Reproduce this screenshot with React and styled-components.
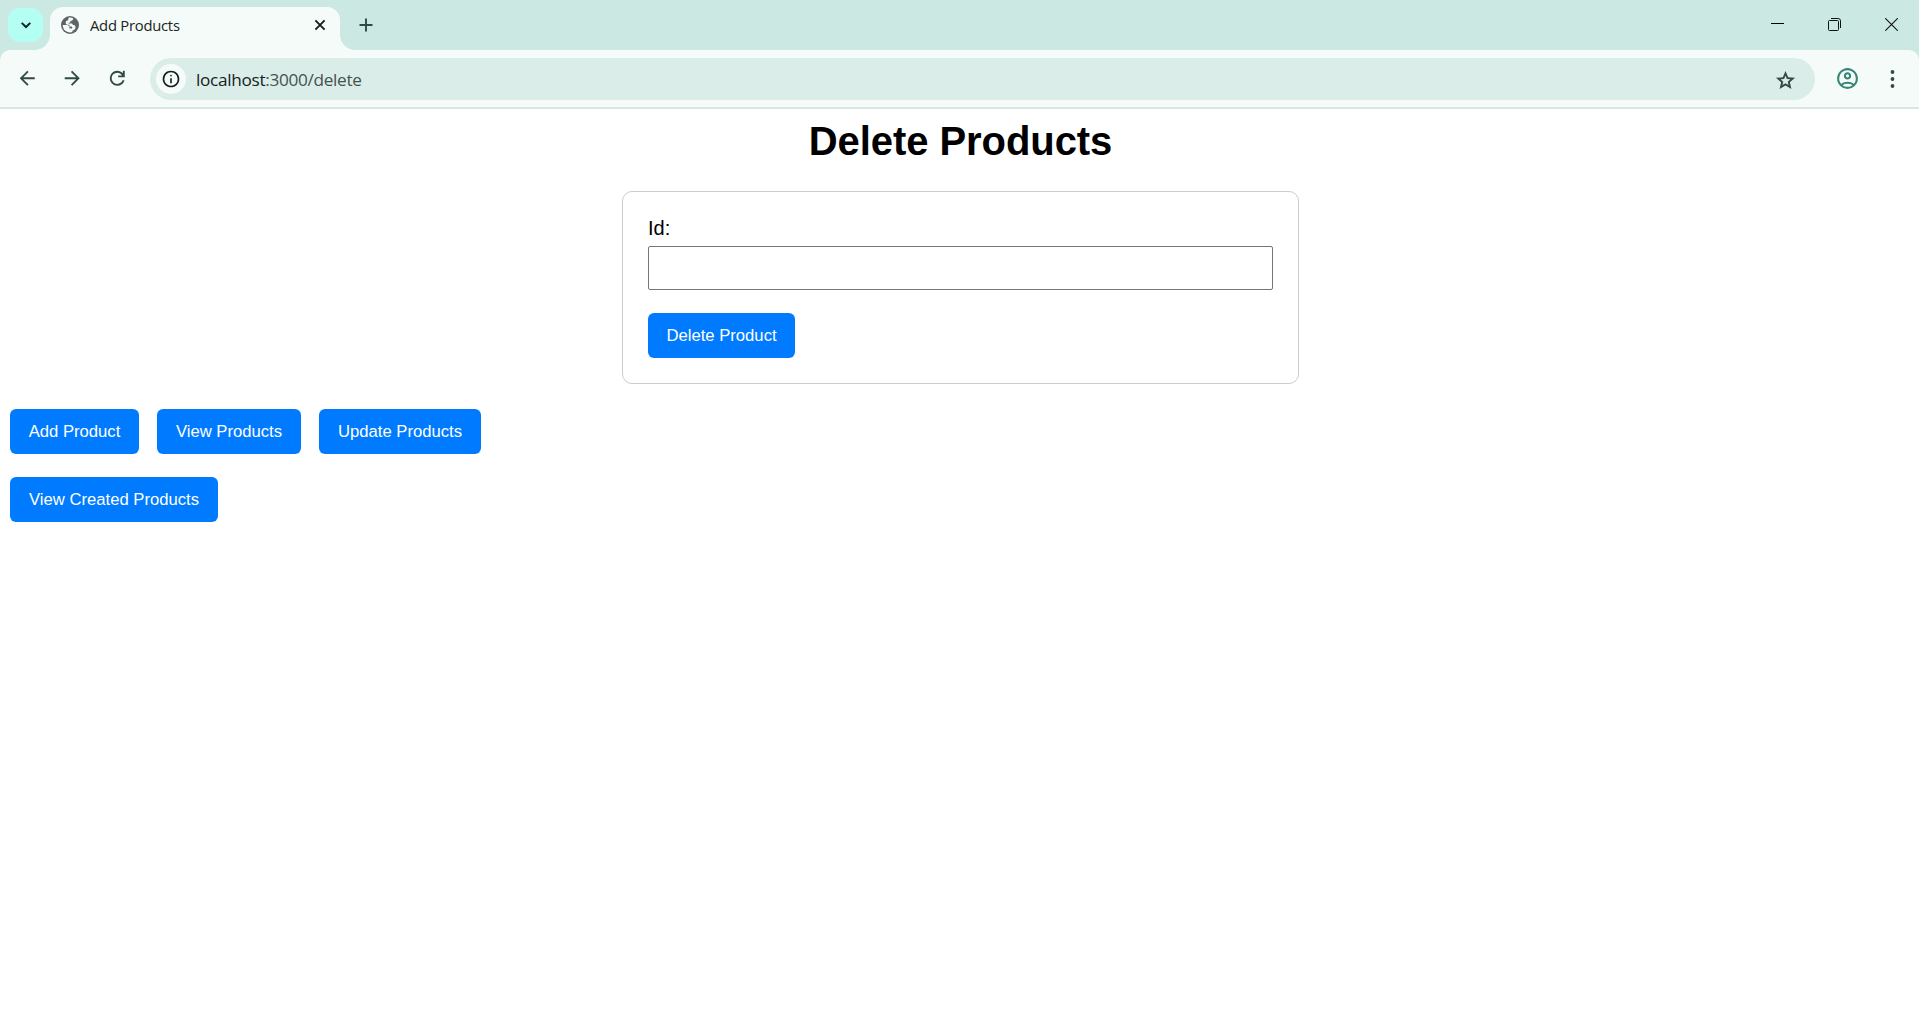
import React from "react";
import styled, { createGlobalStyle } from "styled-components";

const GlobalStyle = createGlobalStyle`
  * { box-sizing: border-box; }
  html, body { margin: 0; background: #fff; overflow: hidden; }
`;

const Window = styled.div`
  display: flex;
  flex-direction: column;
  height: 1017px;
  font-family: "Liberation Sans", Arial, sans-serif;
`;

const TabStrip = styled.header`
  display: flex;
  height: 50px;
  background: #cce8e2;
`;

const TabSearch = styled.button`
  display: grid;
  place-items: center;
  width: 35px;
  height: 34px;
  margin: 8px 7px 0 8px;
  padding: 0;
  border: 0;
  border-radius: 12px;
  background: #b4fff4;
`;

const Tab = styled.div`
  position: relative;
  display: flex;
  align-items: center;
  width: 290px;
  height: 43px;
  margin-top: 7px;
  padding: 0 14px 7px 11px;
  border-radius: 13px 13px 0 0;
  background: #f5fbf9;

  &::before,
  &::after {
    content: "";
    position: absolute;
    bottom: 0;
    width: 15px;
    height: 15px;
  }
  &::before {
    left: -15px;
    background: radial-gradient(circle at 0 0, transparent 14.5px, #f5fbf9 15.2px);
  }
  &::after {
    right: -15px;
    background: radial-gradient(circle at 100% 0, transparent 14.5px, #f5fbf9 15.2px);
  }
`;

const TabTitle = styled.span`
  flex: 1;
  margin-left: 11px;
  color: #1a2422;
  font: 14.8px/20px "Open Sans", "Noto Sans", sans-serif;
  letter-spacing: -0.25px;
`;

const NewTab = styled.div`
  display: grid;
  place-items: center;
  width: 24px;
  height: 24px;
  margin: 13px 0 0 14px;
`;

const WindowControls = styled.div`
  display: flex;
  margin-left: auto;
`;

const WindowControl = styled.div`
  display: grid;
  place-items: center;
  width: ${({ $width }) => $width || 57}px;
  height: 49px;
`;

const ToolbarBack = styled.div`
  background: #cce8e2;
`;

const Toolbar = styled.nav`
  display: flex;
  align-items: center;
  height: 59px;
  padding: 1px 16px 0;
  border-bottom: 2px solid #d9e6e2;
  border-radius: 10px 10px 0 0;
  background: #f5fbf9;
`;

const NavIcons = styled.div`
  display: flex;
  gap: 22.5px;
  width: 134px;
  padding-bottom: 1px;
`;

const AddressBar = styled.div`
  display: flex;
  align-items: center;
  flex: 1;
  height: 42px;
  padding: 0 18px 0 6px;
  border-radius: 21px;
  background: #dbede8;
`;

const SiteInfo = styled.div`
  display: grid;
  place-items: center;
  width: 30px;
  height: 30px;
  border-radius: 50%;
  background: #f5fbf9;
`;

const Url = styled.span`
  flex: 1;
  margin-left: 10px;
  padding-top: 1px;
  color: #46524f;
  font: 17.2px/24px "Open Sans", "Noto Sans", sans-serif;
  letter-spacing: -0.31px;
`;

const Host = styled.span`
  color: #16201e;
`;

const ToolbarActions = styled.div`
  display: flex;
  align-items: center;
  gap: 21px;
  width: 88px;
  padding: 0 0 1px 20px;
`;

const Glyph = styled.svg`
  display: block;
  flex: none;
  width: ${({ $size }) => $size}px;
  height: ${({ $size }) => $size}px;
  color: ${({ $color }) => $color || "#304a45"};
`;

const Page = styled.main`
  flex: 1;
  padding: 9px 8px 10px 10px;
  font-size: 20px;
`;

const Title = styled.h1`
  margin: 0 0 27px;
  font-size: 40px;
  line-height: 46px;
  letter-spacing: -0.06px;
  text-align: center;
`;

const Form = styled.form`
  width: 677px;
  height: 193px;
  margin: 0 auto 25px;
  padding: 25px;
  border: 1px solid #ccc;
  border-radius: 10px;
`;

const Label = styled.label`
  display: block;
  margin-bottom: 6px;
  line-height: 23px;
`;

const TextInput = styled.input`
  display: block;
  width: 100%;
  height: 44px;
  margin: 0 0 23px;
  padding: 10px;
  border: 1px solid #767676;
  border-radius: 2px;
  background: #fff;
  font-size: 16.67px;
`;

const Button = styled.button`
  height: 45px;
  width: ${({ $width }) => $width}px;
  padding: 0;
  border: 0;
  border-radius: 6px;
  background: #007bff;
  color: #fff;
  font: 16.67px/19px "Liberation Sans", Arial, sans-serif;
  white-space: nowrap;
`;

const ButtonRows = styled.div`
  display: flex;
  flex-direction: column;
  gap: 23px;
`;

const ButtonRow = styled.div`
  display: flex;
  gap: 18px;
`;

function MaterialIcon({ path, size, color }) {
  return (
    <Glyph viewBox="0 -960 960 960" $size={size} $color={color}>
      <path fill="currentColor" d={path} />
    </Glyph>
  );
}

const icons = {
  back: "M313-440l224 224-57 56-320-320 320-320 57 56-224 224h487v80H313Z",
  forward: "M647-440H160v-80h487L423-744l57-56 320 320-320 320-57-56 224-224Z",
  reload:
    "M480-160q-134 0-227-93t-93-227q0-134 93-227t227-93q69 0 132 28.5T720-690v-110h80v280H520v-80h168q-32-56-87.5-88T480-720q-100 0-170 70t-70 170q0 100 70 170t170 70q77 0 139-44t87-116h84q-28 106-114 173t-196 67Z",
  info: "M440-280h80v-240h-80v240Zm40-320q17 0 28.5-11.500T520-640q0-17-11.500-28.500T480-680q-17 0-28.500 11.500T440-640q0 17 11.500 28.500T480-600Zm0 520q-83 0-156-31.500T197-197q-54-54-85.500-127T80-480q0-83 31.500-156T197-763q54-54 127-85.500T480-880q83 0 156 31.500T763-763q54 54 85.500 127T880-480q0 83-31.500 156T763-197q-54 54-127 85.500T480-80Zm0-80q134 0 227-93t93-227q0-134-93-227t-227-93q-134 0-227 93t-93 227q0 134 93 227t227 93Z",
  star: "M354-247l126-76 126 77-33-144 111-96-146-13-58-136-58 135-146 13 111 97-33 143ZM233-80l65-281L80-550l288-25 112-265 112 265 288 25-218 189 65 281-247-149L233-80Z",
  profile:
    "M234-276q51-39 114-61.500T480-360q69 0 132 22.500T726-276q35-41 54.500-93T800-480q0-133-93.500-226.500T480-800q-133 0-226.500 93.500T160-480q0 59 19.500 111t54.500 93Zm246-164q-59 0-99.500-40.500T340-580q0-59 40.500-99.500T480-720q59 0 99.500 40.500T620-580q0 59-40.500 99.500T480-440Zm0 360q-83 0-156-31.500T197-197q-54-54-85.500-127T80-480q0-83 31.500-156T197-763q54-54 127-85.500T480-880q83 0 156 31.500T763-763q54 54 85.500 127T880-480q0 83-31.500 156T763-197q-54 54-127 85.500T480-80Zm0-80q53 0 100-15.500t86-44.500q-39-29-86-44.500T480-280q-53 0-100 15.500T294-220q39 29 86 44.500T480-160Zm0-360q26 0 43-17t17-43q0-26-17-43t-43-17q-26 0-43 17t-17 43q0 26 17 43t43 17Z",
};

function GlobeIcon() {
  return (
    <Glyph viewBox="0 0 18 18" $size={18} $color="#5f6368">
      <circle cx="9" cy="9" r="9" fill="currentColor" />
      <path
        fill="#f5fbf9"
        d="M1.700 9h3.900c1.900 0 2.800.9 2.800 2.500v.9h2.300c.4 0 .6-.3.600-.7 0-.8-.6-1.200-1.600-1.200H8.400V8.800H7.100C5.500 8.800 4.700 8 4.700 6.700c0-1.600 1-2.500 2.600-2.500V3c0-.9.600-1.400 1.500-1.400 1.300 0 2.500.3 3.500.9-.2 1.500-1.100 2.300-2.800 2.300v.8c0 .7-.5 1.100-1.200 1.100h-.9v.8h2.700c1.200 0 1.800.6 1.800 1.500h.7c1.200 0 1.900.9 1.900 2.300 0 1.900-1.300 3.100-3.100 3.100v1.500c-1.300.6-3 .7-4.600.1A7.400 7.400 0 0 1 1.700 9Z"
      />
    </Glyph>
  );
}

function TabBar() {
  return (
    <TabStrip>
      <TabSearch aria-label="Search tabs">
        <Glyph viewBox="0 0 12 12" $size={12} $color="#10231f">
          <path d="M1.700 3.900 6 8l4.300-4.100" fill="none" stroke="currentColor" strokeWidth="2" />
        </Glyph>
      </TabSearch>
      <Tab>
        <GlobeIcon />
        <TabTitle>Add Products</TabTitle>
        <Glyph viewBox="0 0 12 12" $size={12} $color="#10201d">
          <path d="m1.400 1.400 9.200 9.200m0-9.200-9.200 9.200" stroke="currentColor" strokeWidth="1.900" />
        </Glyph>
      </Tab>
      <NewTab>
        <Glyph viewBox="0 0 14 14" $size={14}>
          <path d="M.500 7h13M7 .500v13" stroke="currentColor" strokeWidth="1.900" />
        </Glyph>
      </NewTab>
      <WindowControls>
        <WindowControl>
          <Glyph viewBox="0 0 13 13" $size={13} $color="#000">
            <path d="M0 5.500h13" stroke="currentColor" />
          </Glyph>
        </WindowControl>
        <WindowControl $width={57}>
          <Glyph viewBox="0 0 13 13" $size={13} $color="#111">
            <rect x=".5" y="2.500" width="10" height="10" rx="1" fill="none" stroke="currentColor" />
            <path d="M3 .500h7.200a2.300 2.300 0 0 1 2.300 2.300V10" fill="none" stroke="currentColor" />
          </Glyph>
        </WindowControl>
        <WindowControl $width={56}>
          <Glyph viewBox="0 0 13 13" $size={13} $color="#111">
            <path d="m.300.300 12.400 12.400m0-12.400L.300 12.700" stroke="currentColor" strokeWidth="1.100" />
          </Glyph>
        </WindowControl>
      </WindowControls>
    </TabStrip>
  );
}

function NavigationBar() {
  return (
    <ToolbarBack>
      <Toolbar>
        <NavIcons>
          <MaterialIcon path={icons.back} size={22.5} />
          <MaterialIcon path={icons.forward} size={22.5} />
          <MaterialIcon path={icons.reload} size={22.5} />
        </NavIcons>
        <AddressBar>
          <SiteInfo>
            <MaterialIcon path={icons.info} size={20} color="#16201e" />
          </SiteInfo>
          <Url>
            <Host>localhost</Host>:3000/delete
          </Url>
          <MaterialIcon path={icons.star} size={23} color="#3b4946" />
        </AddressBar>
        <ToolbarActions>
          <MaterialIcon path={icons.profile} size={25} color="#378576" />
          <Glyph viewBox="0 0 22 22" $size={22}>
            <circle cx="11.500" cy="4" r="1.900" fill="currentColor" />
            <circle cx="11.500" cy="11" r="1.900" fill="currentColor" />
            <circle cx="11.500" cy="18" r="1.900" fill="currentColor" />
          </Glyph>
        </ToolbarActions>
      </Toolbar>
    </ToolbarBack>
  );
}

export default function App() {
  return (
    <Window>
      <GlobalStyle />
      <TabBar />
      <NavigationBar />
      <Page>
        <Title>Delete Products</Title>
        <Form onSubmit={(event) => event.preventDefault()}>
          <Label htmlFor="product-id">Id:</Label>
          <TextInput id="product-id" type="text" />
          <Button type="submit" $width={147}>Delete Product</Button>
        </Form>
        <ButtonRows>
          <ButtonRow>
            <Button $width={129}>Add Product</Button>
            <Button $width={144}>View Products</Button>
            <Button $width={162}>Update Products</Button>
          </ButtonRow>
          <ButtonRow>
            <Button $width={208}>View Created Products</Button>
          </ButtonRow>
        </ButtonRows>
      </Page>
    </Window>
  );
}
